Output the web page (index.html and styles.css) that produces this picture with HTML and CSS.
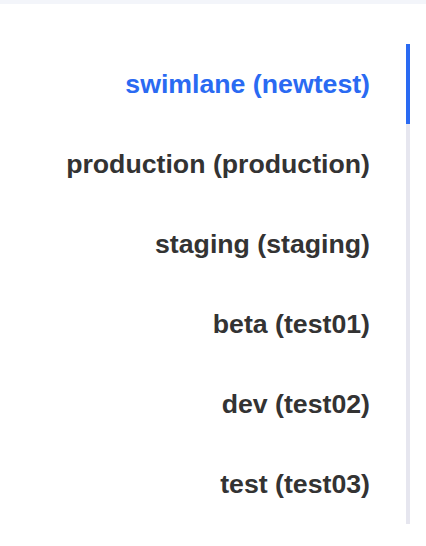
FILE: index.html
```html
<!DOCTYPE html>
<html>
<head>
<meta charset="utf-8">
<link rel="stylesheet" href="styles.css">
</head>
<body>
<div class="topbar"></div>
<div class="page">
  <nav class="anchor">
    <a class="item active">swimlane (newtest)</a>
    <a class="item">production (production)</a>
    <a class="item">staging (staging)</a>
    <a class="item">beta (test01)</a>
    <a class="item">dev (test02)</a>
    <a class="item">test (test03)</a>
  </nav>
</div>
</body>
</html>
```
FILE: styles.css
```css
html, body {
  margin: 0;
  padding: 0;
  background: #ffffff;
}
body {
  font-family: "Liberation Sans", Arial, sans-serif;
  width: 426px;
  height: 546px;
  overflow: hidden;
}
.topbar {
  height: 4px;
  background: #f3f5fa;
}
.page {
  padding-top: 40px;
  padding-right: 16px;
  display: flex;
  justify-content: flex-end;
}
.anchor {
  display: flex;
  flex-direction: column;
  border-right: 4px solid #e6e6ef;
  position: relative;
}
.item {
  position: relative;
  display: flex;
  align-items: center;
  justify-content: flex-end;
  height: 80px;
  padding-right: 36px;
  font-size: 26.7px;
  font-weight: bold;
  color: #333333;
  white-space: nowrap;
}
.item.active {
  color: #2a6af2;
}
.item.active::after {
  content: "";
  position: absolute;
  right: -4px;
  top: 0;
  width: 4px;
  height: 80px;
  background: #2a6af2;
}
```
